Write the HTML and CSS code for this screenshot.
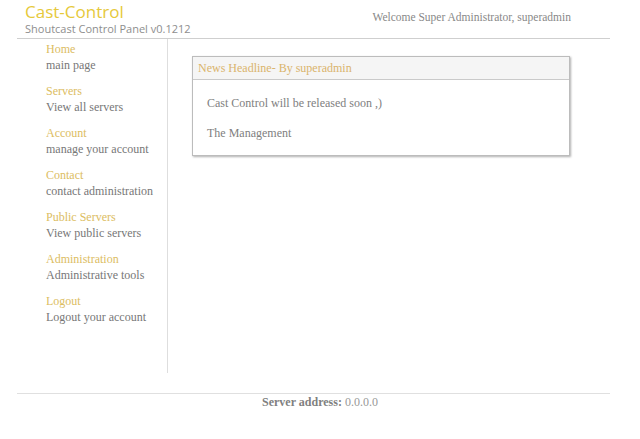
FILE: index.html
```html
<!DOCTYPE html>
<html lang="en">
<head>
    <meta charset="UTF-8">
    <title>Cast-Control</title>
    <link rel="stylesheet" href="styles.css">
</head>
<body>
    <div id="page">
        <div id="header">
            <div class="brand">
                <div class="brand-title">Cast-Control</div>
                <div class="brand-sub">Shoutcast Control Panel v0.1212</div>
            </div>
            <div class="welcome">Welcome Super Administrator, superadmin</div>
        </div>
        <div id="main">
            <div id="sidebar">
                <div class="nav-item"><a class="nav-title">Home</a><div class="nav-desc">main page</div></div>
                <div class="nav-item"><a class="nav-title">Servers</a><div class="nav-desc">View all servers</div></div>
                <div class="nav-item"><a class="nav-title">Account</a><div class="nav-desc">manage your account</div></div>
                <div class="nav-item"><a class="nav-title">Contact</a><div class="nav-desc">contact administration</div></div>
                <div class="nav-item"><a class="nav-title">Public Servers</a><div class="nav-desc">View public servers</div></div>
                <div class="nav-item"><a class="nav-title">Administration</a><div class="nav-desc">Administrative tools</div></div>
                <div class="nav-item"><a class="nav-title">Logout</a><div class="nav-desc">Logout your account</div></div>
            </div>
            <div id="content">
                <div class="news">
                    <div class="news-head">News Headline- By superadmin</div>
                    <div class="news-body">
                        <p>Cast Control will be released soon ,)</p>
                        <p>The Management</p>
                    </div>
                </div>
            </div>
        </div>
        <div id="footer"><b>Server address:</b> 0.0.0.0</div>
    </div>
</body>
</html>
```

FILE: styles.css
```css
body{
    margin: 0;
    background: #fff;
    font-family: "Liberation Serif", "DejaVu Serif", serif;
    font-size: 12px;
    color: #777;
}
#page{
    width: 593px;
    margin-left: 17px;
}
#header{
    display: flex;
    justify-content: space-between;
    height: 38px;
    border-bottom: 1px solid #cfcfcf;
}
.brand{
    padding-left: 8px;
    padding-top: 2px;
}
.brand-title{
    font-family: "Open Sans", "DejaVu Sans", sans-serif;
    font-size: 17px;
    line-height: 20px;
    color: #e6c93a;
}
.brand-sub{
    font-family: "Open Sans", "DejaVu Sans", sans-serif;
    font-size: 11px;
    line-height: 14px;
    color: #8e8e8e;
}
.welcome{
    padding-top: 11px;
    padding-right: 39px;
    font-size: 11.5px;
    color: #888;
}
#main{
    display: flex;
}
#sidebar{
    width: 151px;
    height: 334px;
    border-right: 1px solid #dedede;
    padding-left: 29px;
    padding-top: 2px;
    box-sizing: border-box;
}
.nav-item{
    margin-bottom: 10px;
}
.nav-title{
    display: block;
    line-height: 16px;
    color: #dcbd62;
}
.nav-desc{
    line-height: 16px;
    color: #777;
}
#content{
    padding-left: 24px;
    padding-top: 17px;
}
.news{
    width: 376px;
    height: 98px;
    border: 1px solid #bcbcbc;
    box-shadow: 1px 1px 2px #b0b0b0;
}
.news-head{
    height: 22px;
    line-height: 23px;
    padding-left: 5px;
    background: #f5f5f5;
    border-bottom: 1px solid #cacaca;
    color: #dab46c;
}
.news-body{
    padding: 15px 14px 10px;
}
.news-body p{
    margin: 0 0 14px;
    line-height: 16px;
    color: #808080;
}
#footer{
    margin-top: 20px;
    border-top: 1px solid #e0e0e0;
    text-align: center;
    padding-top: 1px;
    padding-left: 13px;
    color: #999;
}
#footer b{
    color: #808080;
}
```
